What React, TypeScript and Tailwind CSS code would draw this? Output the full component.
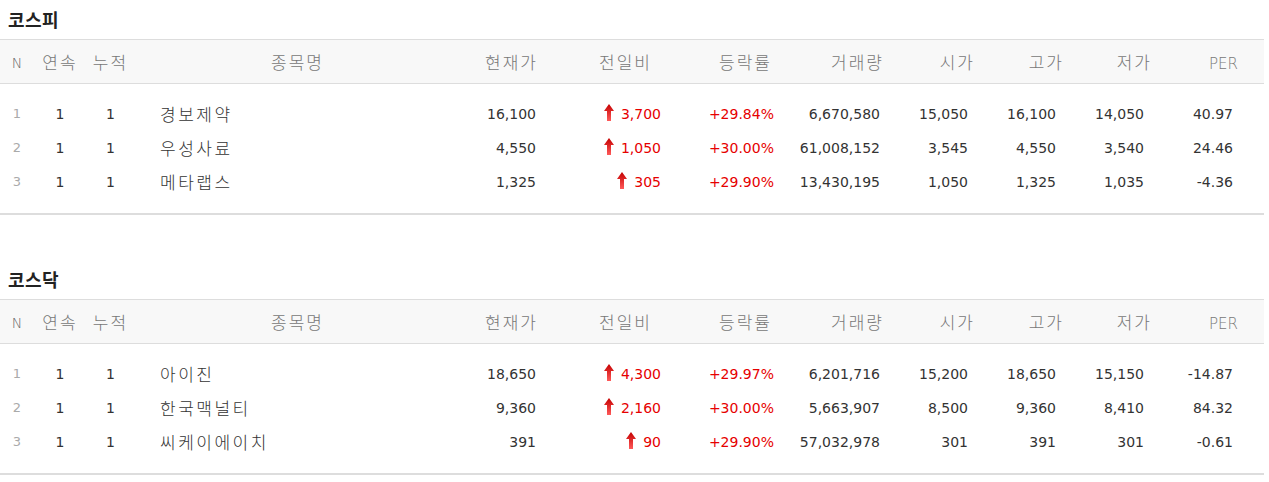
const cols =
  "grid grid-cols-[34px_52px_49px_325px_86px_125px_113px_106px_88px_88px_88px_110px]";

type Row = {
  n: number;
  name: string;
  price: string;
  diff: string;
  rate: string;
  vol: string;
  open: string;
  high: string;
  low: string;
  per: string;
};

const kospi: Row[] = [
  { n: 1, name: "경보제약", price: "16,100", diff: "3,700", rate: "+29.84%", vol: "6,670,580", open: "15,050", high: "16,100", low: "14,050", per: "40.97" },
  { n: 2, name: "우성사료", price: "4,550", diff: "1,050", rate: "+30.00%", vol: "61,008,152", open: "3,545", high: "4,550", low: "3,540", per: "24.46" },
  { n: 3, name: "메타랩스", price: "1,325", diff: "305", rate: "+29.90%", vol: "13,430,195", open: "1,050", high: "1,325", low: "1,035", per: "-4.36" },
];

const kosdaq: Row[] = [
  { n: 1, name: "아이진", price: "18,650", diff: "4,300", rate: "+29.97%", vol: "6,201,716", open: "15,200", high: "18,650", low: "15,150", per: "-14.87" },
  { n: 2, name: "한국맥널티", price: "9,360", diff: "2,160", rate: "+30.00%", vol: "5,663,907", open: "8,500", high: "9,360", low: "8,410", per: "84.32" },
  { n: 3, name: "씨케이에이치", price: "391", diff: "90", rate: "+29.90%", vol: "57,032,978", open: "301", high: "391", low: "301", per: "-0.61" },
];

const ko = "font-['Noto_Sans_CJK_KR',sans-serif]";
const num = "font-['DejaVu_Sans','Noto_Sans_CJK_KR',sans-serif] text-[14px]";

function UpArrow() {
  return (
    <svg width="10" height="17" viewBox="0 0 10 17" className="mr-[7px] mb-[3px]">
      <defs>
        <linearGradient id="ua" x1="0" y1="0" x2="0" y2="1">
          <stop offset="0" stopColor="#c40000" />
          <stop offset="1" stopColor="#ff5a5a" />
        </linearGradient>
      </defs>
      <path d="M5 0 L10 7 L7 7 L7 17 L3 17 L3 7 L0 7 Z" fill="url(#ua)" />
    </svg>
  );
}

function Table({ title, rows }: { title: string; rows: Row[] }) {
  return (
    <section className="w-[1264px]">
      <h2 className={`${ko} h-[39px] flex items-center pl-2 text-[18px] font-bold text-[#222] tracking-[0.5px]`}>
        {title}
      </h2>
      <div className={`${cols} h-[45px] items-center bg-[#f8f8f8] border-y border-[#dddddd] text-[#777] ${ko} font-light text-[17px] tracking-[2px] leading-none`}>
        <div className="text-center font-['DejaVu_Sans'] text-[14px] tracking-normal text-[#666] pt-[3px]">N</div>
        <div className="text-center">연속</div>
        <div className="text-center">누적</div>
        <div className="text-center">종목명</div>
        <div className="text-right pr-[8px]">현재가</div>
        <div className="text-right pr-[19px]">전일비</div>
        <div className="text-right pr-[12px]">등락률</div>
        <div className="text-right pr-[6px]">거래량</div>
        <div className="text-right pr-[3px]">시가</div>
        <div className="text-right pr-[2px]">고가</div>
        <div className="text-right pr-[2px]">저가</div>
        <div className="text-right pr-[26px] pt-[6px] font-['DejaVu_Sans'] text-[15px] tracking-normal text-[#777]">PER</div>
      </div>
      <div className="pt-[13px] pb-[14px] border-b-2 border-[#dddddd]">
        {rows.map((r) => (
          <div key={r.n} className={`${cols} h-[34px] items-center text-[#333] ${num}`}>
            <div className="text-center text-[#aaa] text-[13px]">{r.n}</div>
            <div className="text-center">1</div>
            <div className="text-center">1</div>
            <div className={`pl-[25px] ${ko} font-light text-[17px] tracking-[2.5px] text-[#333]`}>{r.name}</div>
            <div className="text-right pr-[10px]">{r.price}</div>
            <div className="flex justify-end items-center pr-[10px] text-[#e60000]">
              <UpArrow />
              <span>{r.diff}</span>
            </div>
            <div className="text-right pr-[10px] text-[#e60000]">{r.rate}</div>
            <div className="text-right pr-[10px]">{r.vol}</div>
            <div className="text-right pr-[10px]">{r.open}</div>
            <div className="text-right pr-[10px]">{r.high}</div>
            <div className="text-right pr-[10px]">{r.low}</div>
            <div className="text-right pr-[31px]">{r.per}</div>
          </div>
        ))}
      </div>
    </section>
  );
}

export default function App() {
  return (
    <main className="bg-white w-[1269px] h-[482px]">
      <Table title="코스피" rows={kospi} />
      <div className="h-[45px]" />
      <Table title="코스닥" rows={kosdaq} />
    </main>
  );
}
